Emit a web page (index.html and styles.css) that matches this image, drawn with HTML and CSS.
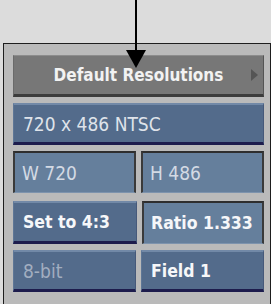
FILE: index.html
```html
<!DOCTYPE html>
<html lang="en">
<head>
  <meta charset="UTF-8" />
  <title>Default Resolutions</title>
  <link rel="stylesheet" href="styles.css">
</head>
<body>
  <!-- callout arrow pointing at the menu button -->
  <svg class="callout" width="24" height="70" viewBox="0 0 24 70">
    <rect x="11" y="0" width="2" height="52" fill="#000"/>
    <polygon points="2,50 22,50 12,68" fill="#000"/>
  </svg>

  <div class="panel">
    <div class="row">
      <button class="btn grey wide">Default Resolutions<span class="more"></span></button>
    </div>
    <div class="row">
      <button class="btn blue wide left">720 x 486 NTSC</button>
    </div>
    <div class="row two">
      <div class="field">W 720</div>
      <div class="field">H 486</div>
    </div>
    <div class="row two r4">
      <button class="btn blue left strong">Set to 4:3</button>
      <div class="field strong">Ratio 1.333</div>
    </div>
    <div class="row two r5">
      <button class="btn blue left dim">8-bit</button>
      <button class="btn blue left strong">Field 1</button>
    </div>
  </div>
</body>
</html>
```

FILE: styles.css
```css
body {
  margin: 0;
  background: #dcdcdc;
  font-family: "DejaVu Sans Condensed", "DejaVu Sans", sans-serif;
  width: 271px;
  height: 304px;
  overflow: hidden;
  position: relative;
}
.callout {
  position: absolute;
  top: 0;
  left: 124px;
  z-index: 10;
}
.panel {
  margin: 43px 0 0 3px;
  width: 268px;
  height: 261px;
  box-sizing: border-box;
  border: 1px solid #1e1e1e;
  border-bottom: none;
  background: #bababa;
  padding: 11px 6px 0 9px;
  display: flex;
  flex-direction: column;
  gap: 6px;
}
.row {
  display: flex;
  height: 42px;
}
.row.two {
  gap: 5px;
}
.row.two > * {
  flex: 1;
  min-width: 0;
}
.row.r4 {
  margin-top: 2px;
  height: 43px;
}
.btn {
  font-family: inherit;
  font-size: 19px;
  margin: 0;
  padding: 0 9px;
  color: #e4e6ea;
  cursor: pointer;
  box-sizing: border-box;
  height: 100%;
  position: relative;
  text-align: center;
  white-space: nowrap;
}
.wide {
  width: 100%;
}
.left {
  text-align: left;
}
.grey {
  background: #777;
  border: none;
  border-top: 1px solid #8c8c8c;
  border-right: 1px solid #555;
  border-bottom: 3px solid #3c3c3c;
  border-left: 1px solid #6a6a6a;
  color: #f2f2f2;
  font-weight: bold;
  font-size: 17px;
}
.more {
  position: absolute;
  right: 5px;
  top: 13px;
  width: 0;
  height: 0;
  border-top: 6px solid transparent;
  border-bottom: 6px solid transparent;
  border-left: 7px solid #555;
}
.blue {
  background: #536b8b;
  border: none;
  border-top: 2px solid #7289a7;
  border-right: 1px solid #46597a;
  border-bottom: 3px solid #1d1c4d;
  border-left: 1px solid #5e7696;
  color: #dfe3ea;
}
.field {
  background: #657f9c;
  box-sizing: border-box;
  height: 100%;
  border-top: 2px solid #2e2e2e;
  border-left: 2px solid #3a3a3a;
  border-right: 2px solid #3a3a3a;
  border-bottom: 1px solid #7d93ad;
  color: #d3dae4;
  font-size: 19px;
  padding: 0 7px;
  display: flex;
  align-items: center;
  white-space: nowrap;
}
.strong {
  color: #f6f7f9;
  font-weight: bold;
  font-size: 17.5px;
}
.dim {
  color: #a2aec0;
}
```
